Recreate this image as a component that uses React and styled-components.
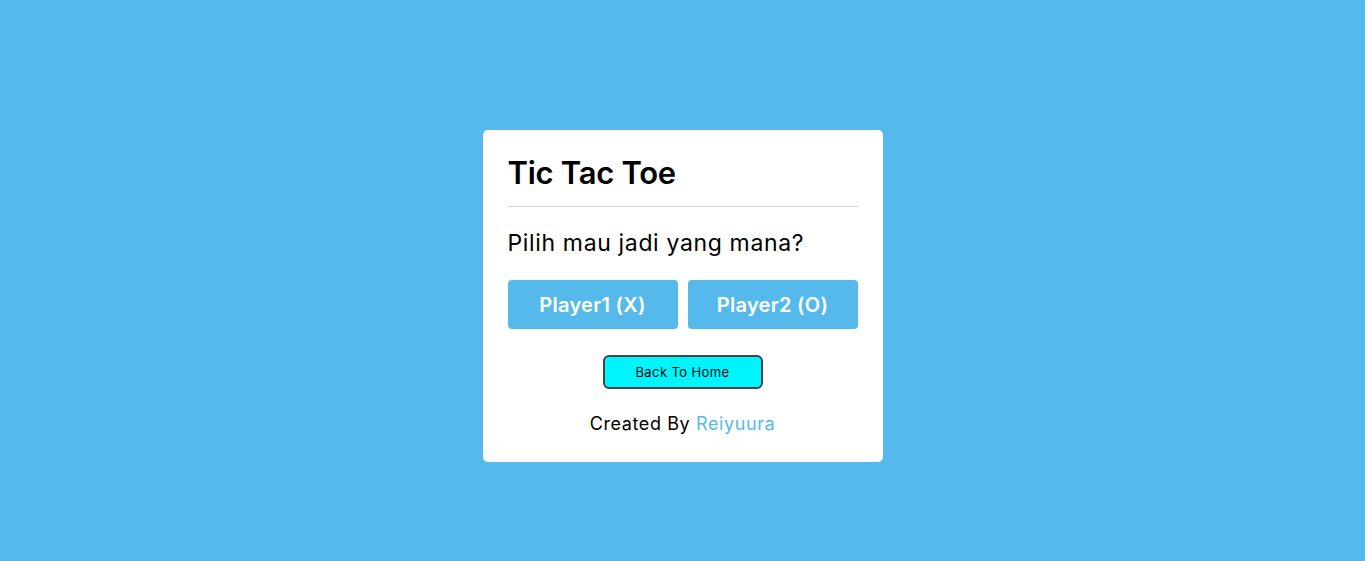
import React from "react";
import styled, { createGlobalStyle } from "styled-components";

const Global = createGlobalStyle`
  html, body { margin: 0; padding: 0; }
  body {
    background: #56b9ec;
    font-family: "Inter", "Open Sans", sans-serif;
    color: #000;
  }
`;

const Page = styled.div`
  min-height: 561px;
  display: flex;
  justify-content: center;
  align-items: flex-start;
  padding-top: 130px;
  box-sizing: border-box;
`;

const Card = styled.div`
  width: 400px;
  box-sizing: border-box;
  background: #fff;
  border-radius: 5px;
  padding: 25px;
  display: flex;
  flex-direction: column;
`;

const Title = styled.h1`
  margin: 0;
  font-size: 31px;
  line-height: 36px;
  font-weight: 600;
  letter-spacing: -0.3px;
  padding-bottom: 15px;
  border-bottom: 1px solid #d3d3d3;
`;

const Question = styled.p`
  margin: 21px 0 0;
  font-size: 23px;
  line-height: 30px;
  font-weight: 400;
  letter-spacing: 0.65px;
`;

const Choices = styled.div`
  margin-top: 22px;
  display: grid;
  grid-template-columns: 1fr 1fr;
  gap: 10px;
`;

const ChoiceButton = styled.button`
  height: 49px;
  border: none;
  border-radius: 4px;
  background: #56b9ec;
  color: #fff;
  font-family: inherit;
  font-size: 20px;
  font-weight: 600;
  letter-spacing: 0.3px;
  cursor: pointer;
`;

const BackButton = styled.button`
  align-self: center;
  margin-top: 26px;
  width: 160px;
  height: 34px;
  box-sizing: border-box;
  background: #00f4fd;
  border: 2px solid #444;
  border-radius: 6px;
  font-family: inherit;
  font-size: 13px;
  letter-spacing: 0.4px;
  color: #000;
  cursor: pointer;
`;

const Credit = styled.p`
  margin: 22px 0 0;
  text-align: center;
  font-size: 18px;
  line-height: 26px;
  letter-spacing: 0.6px;
`;

const Author = styled.span`
  color: #56b9ec;
`;

export default function App() {
  return (
    <>
      <Global />
      <Page>
        <Card>
          <Title>Tic Tac Toe</Title>
          <Question>Pilih mau jadi yang mana?</Question>
          <Choices>
            <ChoiceButton>Player1 (X)</ChoiceButton>
            <ChoiceButton>Player2 (O)</ChoiceButton>
          </Choices>
          <BackButton>Back To Home</BackButton>
          <Credit>
            Created By <Author>Reiyuura</Author>
          </Credit>
        </Card>
      </Page>
    </>
  );
}
